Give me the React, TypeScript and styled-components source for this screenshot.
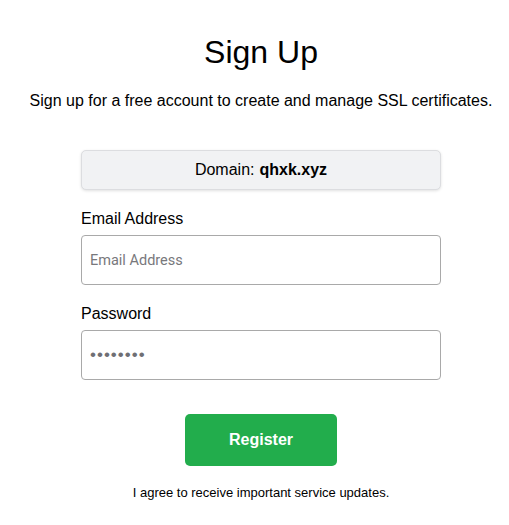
import styled, { createGlobalStyle } from "styled-components";

const GlobalStyle = createGlobalStyle`
  html, body {
    margin: 0;
    padding: 0;
    background: #ffffff;
  }
  body {
    font-family: "Liberation Sans", Arial, sans-serif;
    color: #000000;
  }
`;

const Page = styled.div`
  padding: 28px 2px 20px 15px;
  display: flex;
  flex-direction: column;
  align-items: center;
`;

const Title = styled.h1`
  margin: 0;
  font-size: 32px;
  font-weight: 400;
  line-height: 48px;
`;

const Lead = styled.p`
  margin: 13px 0 0;
  font-size: 16px;
  line-height: 24px;
`;

const Form = styled.form`
  width: 360px;
  margin-top: 37px;
  display: flex;
  flex-direction: column;
`;

const Domain = styled.div`
  height: 40px;
  box-sizing: border-box;
  display: flex;
  align-items: center;
  justify-content: center;
  background: #f1f2f4;
  border: 1px solid #dcdde0;
  border-radius: 5px;
  box-shadow: 0 1px 3px rgba(0, 0, 0, 0.12);
  font-size: 16px;

  strong {
    margin-left: 5px;
    font-weight: 700;
  }
`;

const Field = styled.label`
  display: flex;
  flex-direction: column;
  margin-top: 19px;
`;

const LabelText = styled.span`
  font-size: 16px;
  line-height: 20px;
  margin-bottom: 6px;
`;

const Input = styled.input`
  height: 50px;
  box-sizing: border-box;
  border: 1px solid #a9a9a9;
  border-radius: 4px;
  padding: 0 8px;
  font-family: Roboto, "Open Sans", sans-serif;
  font-size: 14.5px;
  color: #757575;
  outline: none;

  &::placeholder {
    color: #78787c;
  }
`;

const PasswordInput = styled(Input)`
  font-family: "Liberation Sans", Arial, sans-serif;
  font-size: 17px;
  letter-spacing: 1px;
  color: #6f6f74;
`;

const Button = styled.button`
  align-self: center;
  margin-top: 34px;
  width: 152px;
  height: 52px;
  border: none;
  border-radius: 5px;
  background: #22ad4c;
  color: #ffffff;
  font-family: "Liberation Sans", Arial, sans-serif;
  font-size: 16px;
  font-weight: 700;
`;

const Note = styled.p`
  margin: 19px 0 0;
  text-align: center;
  font-size: 13px;
  line-height: 16px;
`;

export default function App() {
  return (
    <>
      <GlobalStyle />
      <Page>
        <Title>Sign Up</Title>
        <Lead>Sign up for a free account to create and manage SSL certificates.</Lead>
        <Form onSubmit={(e) => e.preventDefault()}>
          <Domain>
            Domain: <strong>qhxk.xyz</strong>
          </Domain>
          <Field>
            <LabelText>Email Address</LabelText>
            <Input type="email" placeholder="Email Address" />
          </Field>
          <Field>
            <LabelText>Password</LabelText>
            <PasswordInput type="password" defaultValue="password" />
          </Field>
          <Button type="submit">Register</Button>
          <Note>I agree to receive important service updates.</Note>
        </Form>
      </Page>
    </>
  );
}
